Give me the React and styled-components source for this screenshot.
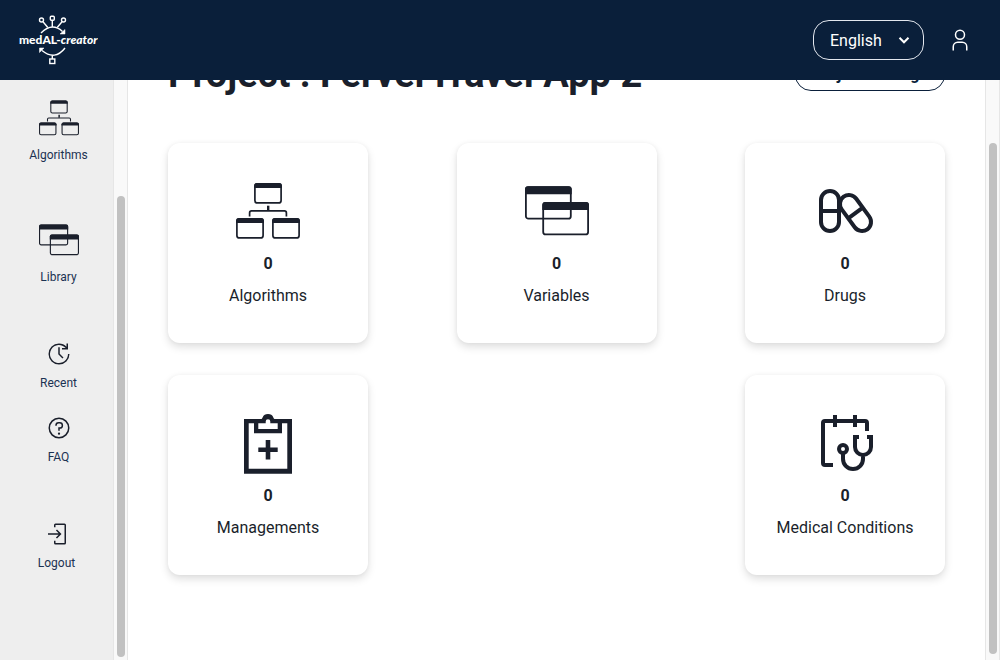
import React from "react";
import styled, { createGlobalStyle } from "styled-components";

const ink = "#1a1f2b";
const navy = "#0a1f3a";
const labelNavy = "#1b3252";

const GlobalStyle = createGlobalStyle`
  *, *::before, *::after { box-sizing: border-box; }
  body {
    margin: 0;
    background: #fff;
    color: ${ink};
    font-family: Roboto, "Liberation Sans", sans-serif;
    font-size: 16px;
    line-height: 26px;
  }
  h1, p { margin: 0; }
  a { color: inherit; text-decoration: none; }
  button, select { font: inherit; cursor: pointer; }
`;

const Page = styled.div`
  display: flex;
  flex-direction: column;
  height: 100vh;
  overflow: hidden;
`;

const Header = styled.header`
  display: flex;
  flex: none;
  align-items: center;
  justify-content: space-between;
  height: 80px;
  padding: 0 28px 0 18px;
  background: ${navy};
  color: #fff;
  z-index: 1;
`;

const HeaderActions = styled.div`
  display: flex;
  align-items: center;
  gap: 24px;
`;

const LogoLink = styled.a`
  display: flex;
`;

const LogoText = styled.text`
  font-family: Lato, sans-serif;
  font-size: 12px;
  font-weight: 900;
`;

const LanguagePicker = styled.label`
  display: grid;
  grid-template-columns: 1fr 20px;
  align-items: center;
  width: 111px;
  svg {
    grid-area: 1 / 2;
    margin-left: -10px;
    pointer-events: none;
  }
`;

const LanguageSelect = styled.select`
  grid-area: 1 / 1 / 2 / 3;
  height: 40px;
  padding: 2px 16px 0;
  border: 1px solid #e3e7ee;
  border-radius: 16px;
  background: transparent;
  color: #fff;
  appearance: none;
`;

const IconButton = styled.button`
  display: flex;
  padding: 0;
  border: 0;
  background: none;
  color: inherit;
`;

const Body = styled.div`
  display: flex;
  flex: 1;
  min-height: 0;
`;

const Sidebar = styled.aside`
  display: flex;
  flex: none;
  flex-direction: column;
  gap: 56px;
  width: 113px;
  padding-top: 18px;
  background: #eee;
  color: ${labelNavy};
  font-size: 12px;
  line-height: 18px;
`;

const Nav = styled.nav`
  display: flex;
  flex-direction: column;
  gap: 56px;
  padding-left: 4px;
`;

const NavGroup = styled.div`
  display: flex;
  flex-direction: column;
  gap: 24px;
`;

const NavLink = styled.a`
  display: flex;
  flex-direction: column;
  align-items: center;
  gap: 8px;
  svg { color: ${ink}; }
`;

const LogoutButton = styled(NavLink).attrs({ as: "button" })`
  padding: 0;
  border: 0;
  background: none;
  color: inherit;
`;

const ScrollTrack = styled.div`
  display: flex;
  flex: none;
  flex-direction: column;
  width: 15px;
  padding: ${(p) => p.$top}px 2px ${(p) => p.$bottom}px 3px;
  border: solid #e6e6e6;
  border-width: 0 1px;
  background: #f9f9f9;
`;

const ScrollThumb = styled.div`
  flex: 1;
  border-radius: 4px;
  background: #c1c1c1;
`;

const Main = styled.main`
  flex: 1;
  min-width: 0;
  padding: 0 40px;
  overflow: hidden;
`;

const TitleRow = styled.div`
  display: flex;
  align-items: flex-end;
  justify-content: space-between;
  margin-top: -25px;
  margin-bottom: 52px;
`;

const Title = styled.h1`
  font-size: 38px;
  font-weight: 700;
  line-height: 34px;
  white-space: nowrap;
`;

const SettingsButton = styled.button`
  flex: none;
  height: 36px;
  width: 150px;
  padding: 4px 0 0;
  border: 1px solid ${navy};
  border-radius: 16px;
  background: #fff;
  color: ${navy};
  font-weight: 700;
`;

const Cards = styled.div`
  display: flex;
  flex-wrap: wrap;
  justify-content: space-between;
  gap: 32px;
`;

const Card = styled.a`
  display: flex;
  flex-direction: column;
  align-items: center;
  gap: 6px;
  width: 200px;
  height: 200px;
  padding-top: 36px;
  border-radius: 12px;
  background: #fff;
  box-shadow: 0 4px 8px rgba(0, 0, 0, 0.13), 0 0 4px rgba(0, 0, 0, 0.04);
  svg { margin-bottom: 2px; }
`;

const Count = styled.span`
  font-weight: 700;
`;

const AlgorithmsIcon = ({ size }) => (
  <svg width={size} height={size} viewBox="0 0 64 64" fill="none" stroke="currentColor" strokeWidth="1.7" aria-hidden="true">
    {[[18, 4], [0, 39], [36, 39]].map(([x, y]) => (
      <g key={x}>
        <rect x={x + 0.9} y={y + 0.9} width="26.2" height="19" rx="2.5" />
        <path d={`M${x} ${y + 5}v-2q0-3 3-3h22q3 0 3 3v2z`} fill="currentColor" stroke="none" />
      </g>
    ))}
    <path d="M32.2 26.7v5" strokeWidth="2.4" />
    <path d="M13.6 37.6v-3.7q0-2 2-2h32.8q2 0 2 2v3.7" />
  </svg>
);

const WindowsIcon = ({ size }) => (
  <svg width={size} height={size} viewBox="0 0 64 64" fill="none" stroke="currentColor" strokeWidth="1.8" aria-hidden="true">
    {[[0, 7.3], [17.3, 23]].map(([x, y]) => (
      <g key={x}>
        <rect x={x + 0.9} y={y + 0.9} width="44.9" height="31.5" rx="2.5" />
        <path d={`M${x} ${y + 8}v-5q0-3 3-3h40.7q3 0 3 3v5z`} fill="currentColor" stroke="none" />
      </g>
    ))}
  </svg>
);

const PillsIcon = ({ size }) => (
  <svg width={size} height={size} viewBox="0 0 64 64" fill="none" stroke="currentColor" strokeWidth="4" aria-hidden="true">
    <rect x="8" y="12" width="18" height="40" rx="9" />
    <path d="M8 32h18" />
    <g transform="rotate(-36 42.5 34)">
      <rect x="33.5" y="13.9" width="18" height="40.2" rx="9" />
      <path d="M33.5 34h18" />
    </g>
  </svg>
);

const ClipboardIcon = ({ size }) => (
  <svg width={size} height={size} viewBox="0 0 64 64" fill="currentColor" aria-hidden="true">
    <path
      fillRule="evenodd"
      d="M8 8h17.5c1.3 0 .8-5 6.5-5s5.2 5 6.5 5H56v54.7H8zM12.7 12.3v45.4h38.6V12.3H46V22.3H18V12.3zM22.3 12.3V18h19.4v-5.7h-7.4v-1.800a2.300 2.300 0 0 0-4.600 0v1.800z"
    />
    <path d="M29.7 29h4.6v7.4h7.4v4.6h-7.4v7.4h-4.6V41h-7.4v-4.6h7.4z" />
  </svg>
);

const CalendarStethoscopeIcon = ({ size }) => (
  <svg width={size} height={size} viewBox="0 0 64 64" fill="none" stroke="currentColor" strokeWidth="4" aria-hidden="true">
    <path d="M20 54h-8q-2 0-2-2V12q0-2 2-2h40q2 0 2 2v8M22 4v12M42 4v12" />
    <path d="M46 26h-4v10a8 8 0 0 0 16 0V26h-4M50 44v4a10 10 0 0 1-20 0v-6" />
    <circle cx="30" cy="38" r="4" />
  </svg>
);

const LineIcon = ({ children }) => (
  <svg width="24" height="24" viewBox="0 0 32 32" fill="currentColor" aria-hidden="true">
    {children}
  </svg>
);

const RecentIcon = () => (
  <LineIcon>
    <path d="M20.59 22 15 16.41V7h2v8.58l5 5.01z" />
    <path
      transform="matrix(-1 0 0 1 32 0)"
      d="M16 2A13.94 13.94 0 0 0 6 6.23V2H4v8h8V8H7.08A12 12 0 1 1 4 16H2A14 14 0 1 0 16 2z"
    />
  </LineIcon>
);

const HelpIcon = () => (
  <LineIcon>
    <path d="M16 2a14 14 0 1 0 14 14A14 14 0 0 0 16 2zm0 26a12 12 0 1 1 12-12 12 12 0 0 1-12 12z" />
    <circle cx="16" cy="23.5" r="1.5" />
    <path d="M17 8h-1.5A4.49 4.49 0 0 0 11 12.49V13h2v-.5A2.5 2.5 0 0 1 15.5 10H17a2.5 2.5 0 0 1 0 5h-2v4.5h2V17a4.5 4.5 0 0 0 0-9z" />
  </LineIcon>
);

const LogoutIcon = () => (
  <LineIcon>
    <path d="M26 30H14a2 2 0 0 1-2-2v-3h2v3h12V4H14v3h-2V4a2 2 0 0 1 2-2h12a2 2 0 0 1 2 2v24a2 2 0 0 1-2 2z" />
    <path d="M14.59 20.59 18.17 17H4v-2h14.17l-3.58-3.59L16 10l6 6-6 6z" />
  </LineIcon>
);

const UserIcon = () => (
  <LineIcon>
    <path d="M16 4a5 5 0 1 1-5 5 5 5 0 0 1 5-5m0-2a7 7 0 1 0 7 7 7 7 0 0 0-7-7z" />
    <path d="M26 30h-2v-5a5 5 0 0 0-5-5h-6a5 5 0 0 0-5 5v5H6v-5a7 7 0 0 1 7-7h6a7 7 0 0 1 7 7z" />
  </LineIcon>
);

const Logo = () => (
  <svg width="80" height="56" viewBox="18 12 80 56" fill="none" stroke="#fff" strokeWidth="1.4" role="img" aria-label="medAL-creator">
    <circle cx="41.5" cy="20" r="2" />
    <rect x="50.3" y="16.2" width="4" height="4" rx="1" />
    <circle cx="63.5" cy="20" r="2" />
    <path d="M52.3 20.5v6.5M43 21.8l4.8 5.7M62 21.8l-4.8 5.7" />
    <path d="M41 33q11-11 21.5-1.5" />
    <path d="M65 29.5V34h-5z" fill="#fff" strokeWidth="0.5" />
    <path d="M65 48q-10 13-23 2.5" />
    <path d="M39.5 52.5V48H44z" fill="#fff" strokeWidth="0.5" />
    <path d="M52.3 55.5V59" />
    <rect x="49.8" y="59" width="5" height="4.5" />
    <LogoText x="19" y="44" fill="#fff" stroke="none">
      medAL-<tspan fontStyle="italic">creator</tspan>
    </LogoText>
  </svg>
);

const cards = [
  { label: "Algorithms", Icon: AlgorithmsIcon },
  { label: "Variables", Icon: WindowsIcon },
  { label: "Drugs", Icon: PillsIcon },
  { label: "Managements", Icon: ClipboardIcon },
  { label: "Medical Conditions", Icon: CalendarStethoscopeIcon },
];

export default function App() {
  return (
    <Page>
      <GlobalStyle />
      <Header>
        <LogoLink href="#home"><Logo /></LogoLink>
        <HeaderActions>
          <LanguagePicker>
            <LanguageSelect aria-label="Language" defaultValue="en">
              <option value="en">English</option>
            </LanguageSelect>
            <svg width="20" height="20" viewBox="0 0 20 20" fill="none" stroke="currentColor" strokeWidth="2" aria-hidden="true">
              <path d="M5.5 7.8l4.5 4.5 4.5-4.5" />
            </svg>
          </LanguagePicker>
          <IconButton aria-label="Account"><UserIcon /></IconButton>
        </HeaderActions>
      </Header>
      <Body>
        <Sidebar>
          <Nav>
            <NavLink href="#algorithms"><AlgorithmsIcon size={40} />Algorithms</NavLink>
            <NavLink href="#library"><WindowsIcon size={40} />Library</NavLink>
            <NavGroup>
              <NavLink href="#recent"><RecentIcon />Recent</NavLink>
              <NavLink href="#faq"><HelpIcon />FAQ</NavLink>
            </NavGroup>
          </Nav>
          <LogoutButton><LogoutIcon />Logout</LogoutButton>
        </Sidebar>
        <ScrollTrack $top={116} $bottom={3}><ScrollThumb /></ScrollTrack>
        <Main>
          <TitleRow>
            <Title>Project : FerverTravel App 2</Title>
            <SettingsButton>Project Settings</SettingsButton>
          </TitleRow>
          <Cards>
            {cards.map(({ label, Icon }) => (
              <Card key={label} href={`#${label.toLowerCase().replace(" ", "-")}`}>
                <Icon size={64} />
                <Count>0</Count>
                <span>{label}</span>
              </Card>
            ))}
          </Cards>
        </Main>
        <ScrollTrack $top={63} $bottom={6}><ScrollThumb /></ScrollTrack>
      </Body>
    </Page>
  );
}
